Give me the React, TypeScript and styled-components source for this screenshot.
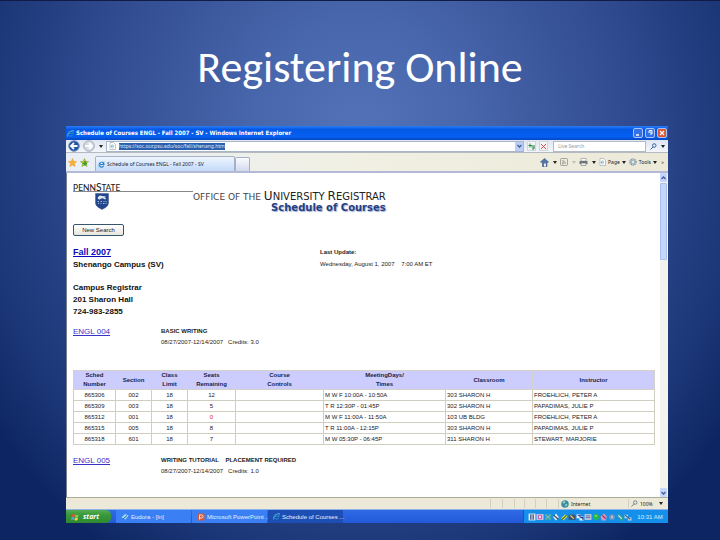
import React from "react";
import styled, { createGlobalStyle, css } from "styled-components";

const Global = createGlobalStyle`
  * { box-sizing: border-box; }
  body { margin: 0; background: #10265f; }
  button, input { font: inherit; margin: 0; padding: 0; border: 0; background: none; color: inherit; }
  svg { display: block; flex: none; }
`;

const Slide = styled.main`
  min-height: 100vh;
  padding: 0 52px 16px 66px;
  border-top: 1px solid #101c48;
  background: radial-gradient(ellipse 62% 92% at 50% 26%, #5573b8 0%, #4866ac 25%, #344f94 55%, #1c3777 85%, #0d2663 100%);
  font-family: "Liberation Sans", Arial, sans-serif;
  color: #222;
`;
const SlideTitle = styled.h1`
  margin: 0;
  height: 125px;
  padding: 41px 14px 0 0;
  text-align: center;
  color: #fff;
  font: 400 44px/50px Carlito, Lato, "Open Sans", sans-serif;
`;
const Window = styled.section`
  display: flex;
  flex-direction: column;
  background: #fff;
`;
const TitleBar = styled.header`
  display: flex;
  align-items: center;
  gap: 2px;
  height: 14px;
  padding: 0 1px;
  background: linear-gradient(#2a7cf5, #0458e6 25%, #0560f2 75%, #0347c4);
`;
const WindowName = styled.h2`
  flex: 1;
  margin: 0;
  color: #fff;
  white-space: nowrap;
  font: 700 6px/12px "DejaVu Sans Condensed", "DejaVu Sans", sans-serif;
`;
const Caption = styled.button<{ $close?: boolean }>`
  width: 10px;
  height: 10px;
  border: 1px solid #a9c3f5;
  border-radius: 2px;
  background: ${(p) => (p.$close ? "#dc5434" : "#3471e8")};
`;
const Row = styled.div<{ $h: number; $tabs?: boolean }>`
  display: flex;
  align-items: center;
  gap: 3px;
  height: ${(p) => p.$h}px;
  padding: 0 3px 0 2px;
  background: ${(p) => (p.$tabs ? "linear-gradient(90deg, #e9eff8, #f1f0e4 45%, #ece9d8)" : "linear-gradient(#dfe6f2, #f3f6fb)")};
  border-bottom: ${(p) => (p.$tabs ? "2px solid #b3b9d6" : "1px solid #b4bac2")};
`;
const Address = styled.label`
  flex: 1;
  display: flex;
  align-items: center;
  gap: 3px;
  height: 11px;
  padding-left: 2px;
  border: 1px solid #a9b6c8;
  background: #fff;
`;
const Url = styled.input`
  width: 106px;
  height: 7px;
  background: #2d5fae;
  color: #dfe8f6;
  font: 5px/7px "Noto Sans", sans-serif;
`;
const Spacer = styled.span`
  flex: 1;
`;
const Tool = styled.button<{ $boxed?: boolean; $blue?: boolean }>`
  display: flex;
  align-items: center;
  justify-content: center;
  gap: 2px;
  height: 10px;
  min-width: 5px;
  color: #222;
  font: 5px/8px "Noto Sans", sans-serif;
  ${(p) => p.$boxed && css`width: 9px; border: 1px solid #cfd6de; background: #f3f5f5;`}
  ${(p) => p.$blue && css`width: 8px; height: 9px; background: #bccdf6;`}
`;
const Search = styled.input`
  width: 93px;
  height: 11px;
  padding-left: 4px;
  margin: 0 1px 0 2px;
  border: 1px solid #b2bac2;
  background: #fff;
  font: 5px/9px "Noto Sans", sans-serif;
  &::placeholder { color: #999; opacity: 1; }
`;
const Tab = styled.button<{ $blank?: boolean }>`
  display: flex;
  align-items: center;
  gap: 2px;
  align-self: flex-end;
  width: ${(p) => (p.$blank ? 15 : 140)}px;
  height: ${(p) => (p.$blank ? 14 : 15)}px;
  margin-left: ${(p) => (p.$blank ? -3 : 3)}px;
  padding-left: 2px;
  border: 1px solid #a5b1c9;
  border-bottom: 0;
  border-radius: 2px 2px 0 0;
  background: ${(p) => (p.$blank ? "linear-gradient(#fafaff, #d3d9ec)" : "linear-gradient(#eef5fe, #c3daf8)")};
  white-space: nowrap;
  color: #223;
  font: 5px/8px "Noto Sans", sans-serif;
`;
const Viewport = styled.div`
  display: flex;
`;
const Page = styled.article`
  flex: 1;
  height: 324px;
  overflow: hidden;
  padding: 8px 5px 0 6px;
  border-left: 1px solid #777f8c;
`;
const ScrollTrack = styled.div`
  display: flex;
  flex-direction: column;
  justify-content: space-between;
  width: 8px;
  background: #f4f4ee;
`;
const ScrollTop = styled.div`
  display: grid;
  gap: 1px;
`;
const ScrollButton = styled.button`
  display: flex;
  align-items: center;
  justify-content: center;
  width: 7px;
  height: 9px;
  border-radius: 1px;
  background: #c5d5fb;
`;
const Thumb = styled.div`
  width: 7px;
  height: 77px;
  border: 1px solid #a9bdf0;
  border-radius: 1px;
  background: #c5d5fc;
`;
const Banner = styled.div`
  display: grid;
  grid-template-columns: 120px 1fr;
  height: 43px;
`;
const Offices = styled.div`
  padding-top: 9px;
  white-space: nowrap;
  color: #444;
  font: 9px/12px "DejaVu Sans", Verdana, sans-serif;
`;
const Caps = styled.span<{ $big?: boolean }>`
  font-size: ${(p) => (p.$big ? 12 : 10)}px;
  color: #222;
`;
const OfficeBlock = styled.div`
  width: max-content;
  text-align: right;
`;
const Schedule = styled.div`
  color: #263f7f;
  font: 700 10px/9px "DejaVu Sans", Verdana, sans-serif;
  text-shadow: 1px 1px 1px #9fb0d8;
`;
const NewSearch = styled.button`
  display: block;
  width: 51px;
  height: 12px;
  border: 1px solid #34566f;
  border-radius: 2px;
  background: linear-gradient(#fff, #e6e5dd);
  font-size: 6px;
  line-height: 10px;
`;
const Split = styled.div`
  display: grid;
  grid-template-columns: 247px 1fr;
  margin-top: 10px;
`;
const Block = styled.div<{ $bold?: boolean }>`
  font-size: ${(p) => (p.$bold ? 8 : 6)}px;
  line-height: 12px;
  font-weight: ${(p) => (p.$bold ? 700 : 400)};
  color: ${(p) => (p.$bold ? "#111" : "#222")};
  white-space: pre;
`;
const Contact = styled(Block)`
  margin-top: 11px;
`;
const Link = styled.a<{ $strong?: boolean }>`
  color: ${(p) => (p.$strong ? "#0a08b8" : "#3a32c8")};
  font-size: ${(p) => (p.$strong ? 9 : 8)}px;
`;
const Course = styled.div`
  display: grid;
  grid-template-columns: 88px 1fr;
  margin-top: 8px;
  color: #222;
  font-size: 6px;
  line-height: 11px;
  white-space: pre;
`;
const CourseName = styled.div`
  font-weight: 700;
`;
const Table = styled.table`
  width: 100%;
  margin: 22px 0 10px;
  table-layout: fixed;
  border-collapse: collapse;
  border: 1px solid #c2c0b2;
  font-size: 6px;
  line-height: 9px;
`;
const Th = styled.th`
  height: 19px;
  padding: 0;
  border: 1px solid #d3d1cb;
  background: #ccccfd;
  color: #1c1c48;
  white-space: pre-line;
`;
const Td = styled.td<{ $left?: boolean; $full?: boolean }>`
  height: 11px;
  padding: 0 1px;
  border: 1px solid #d0cebf;
  text-align: ${(p) => (p.$left ? "left" : "center")};
  color: ${(p) => (p.$full ? "#e02020" : "#20181e")};
  white-space: nowrap;
`;
const Status = styled.footer`
  display: flex;
  align-items: center;
  justify-content: flex-end;
  height: 12px;
  border-top: 1px solid #a9ad98;
  background: #ece9d8;
  font: 5px/8px "Noto Sans", sans-serif;
`;
const StatusCell = styled.span<{ $w: number }>`
  display: flex;
  align-items: center;
  gap: 2px;
  width: ${(p) => p.$w}px;
  height: 9px;
  border-left: 1px solid #d2cfbc;
  padding-left: 2px;
`;
const Taskbar = styled.nav`
  display: flex;
  align-items: stretch;
  height: 14px;
  border-top: 1px solid #8fb2ec;
  background: linear-gradient(#2f6be6, #2259d8);
`;
const Start = styled.button`
  display: flex;
  align-items: center;
  gap: 4px;
  width: 45px;
  margin-right: 4px;
  padding-left: 5px;
  border-radius: 0 5px 5px 0;
  background: linear-gradient(#55ad50, #37983a 40%, #2e8a30);
  color: #fff;
  font: italic 700 7px/12px "Open Sans", sans-serif;
`;
const Task = styled.button<{ $active?: boolean }>`
  display: flex;
  align-items: center;
  gap: 2px;
  width: 75px;
  margin-left: 1px;
  padding-left: 5px;
  border-radius: 1px;
  background: ${(p) => (p.$active ? "#1d4eb4" : "#3a80f4")};
  color: #e6effc;
  white-space: nowrap;
  font: 6px/12px "Liberation Sans", sans-serif;
`;
const Tray = styled.div`
  display: flex;
  align-items: center;
  width: 145px;
  margin-left: auto;
  padding-left: 4px;
  border-left: 1px solid #0b5cb5;
  background: #1590ea;
  color: #d9eefc;
  font: 6px/12px "Liberation Sans", sans-serif;
`;
const Clock = styled.time`
  flex: 1;
  text-align: center;
  white-space: nowrap;
`;

const IE = ({ size = 7 }: { size?: number }) => (
  <svg width={size} height={size} viewBox="0 0 14 14" fill="none">
    <path d="M11.5 9.5A4.8 4.8 0 1 1 12 7H4" stroke="#247cc4" strokeWidth="2.4" />
    <path d="M1 13C-1 9 8 0 13 1c1 .5.5 2 0 3" stroke="#8bd0ea" strokeWidth="1.2" />
  </svg>
);
const Caret = ({ faint }: { faint?: boolean }) => (
  <svg width="4" height="3" viewBox="0 0 4 3"><path d="M0 0h4L2 3z" fill={faint ? "#c4c1b4" : "#222"} /></svg>
);
const NavCircle = ({ back }: { back?: boolean }) => (
  <svg width="12" height="12" viewBox="0 0 12 12">
    <circle cx="6" cy="6" r="5.3" fill={back ? "#1f57a8" : "#d5dae2"} stroke={back ? "#8095b5" : "#a5adb8"} />
    <path d={back ? "M9.5 6H3m3-3L3 6l3 3" : "M2.5 6H9M6 3l3 3-3 3"} stroke="#fff" strokeWidth="1.8" fill="none" />
  </svg>
);
const Star = ({ add }: { add?: boolean }) => (
  <svg width="9" height="9" viewBox="0 0 18 18">
    <path d="m9 1 2.4 5.5 6 .6-4.5 4 1.3 5.9L9 14l-5.2 3 1.3-5.9-4.5-4 6-.6z" fill={add ? "#d9c43a" : "#f9b02c"} stroke={add ? "#6c9c38" : "#e09a3c"} />
    {add && <path d="M10 6v9M5 11h9" stroke="#2e9c2e" strokeWidth="3" />}
  </svg>
);
const PageIcon = () => (
  <svg width="7" height="8" viewBox="0 0 14 16">
    <path d="M2 1h7l4 4v10H2z" fill="#fff" stroke="#84909c" /><path d="M4 9h6M9 11a3 3 0 1 1 1-3" stroke="#4a8cae" fill="none" />
  </svg>
);
const Home = () => (
  <svg width="9" height="9" viewBox="0 0 18 18">
    <path d="M1 8 9 1l8 7-3 1v8H5V9z" fill="#5575a8" stroke="#26406e" /><path d="M8 11h4v6H8z" fill="#e8edf5" />
  </svg>
);
const Feed = () => (
  <svg width="8" height="8" viewBox="0 0 16 16" fill="none" stroke="#8c8c88" strokeWidth="1.5">
    <rect x="1" y="1" width="14" height="14" rx="2" /><path d="M4 5q7 0 7 7M4 8q4 0 4 4" /><circle cx="5" cy="11.5" r=".8" />
  </svg>
);
const Printer = () => (
  <svg width="9" height="8" viewBox="0 0 18 16">
    <path d="M4 1h10v5H4z" fill="#fff" stroke="#777" /><path d="M1 6h16v6H1z" fill="#70757c" /><path d="M4 10h10v5H4z" fill="#e9eaf0" stroke="#666" />
  </svg>
);
const Gear = () => (
  <svg width="8" height="8" viewBox="0 0 16 16" fill="none">
    <circle cx="8" cy="8" r="6" stroke="#7f9cb8" strokeWidth="3" strokeDasharray="2.6 1.2" /><circle cx="8" cy="8" r="4" stroke="#8da6bc" strokeWidth="2" />
  </svg>
);
const Lens = ({ color = "#3563a5" }: { color?: string }) => (
  <svg width="7" height="7" viewBox="0 0 14 14" fill="none" stroke={color} strokeWidth="2">
    <circle cx="8.5" cy="5" r="3.5" /><path d="m6 8-5 5" />
  </svg>
);
const Globe = () => (
  <svg width="8" height="8" viewBox="0 0 16 16">
    <circle cx="8" cy="8" r="7.5" fill="#3b8ba5" /><path d="M3 4q4-4 6 0-2 4-5 3zM8 9q5-2 5 1l-4 4z" fill="#8fd3b0" />
  </svg>
);
const Flag = () => (
  <svg width="8" height="8" viewBox="0 0 16 16">
    <path d="M2 3q3-2 6 0L7 8Q4 6 1 8z" fill="#e9512f" /><path d="M9 3q3 2 6 0l-1 5q-3 2-6 0z" fill="#8bd044" />
    <path d="M1 9q3-2 6 0l-1 5q-3-2-6 0z" fill="#5d9cf5" /><path d="M8 9q3 2 6 0l-1 5q-3 2-6 0z" fill="#fad03c" />
  </svg>
);
const Chevron = ({ down }: { down?: boolean }) => (
  <svg width="5" height="4" viewBox="0 0 10 8"><path d={down ? "m1 2 4 4 4-4" : "m1 6 4-4 4 4"} stroke="#405c92" strokeWidth="2.5" fill="none" /></svg>
);
const RuledName = styled.div`
  height: 11px;
  border-bottom: 1px solid #888;
  color: #222;
  font: 10px/12px Carlito, Lato, sans-serif;
`;
const BigS = styled.span`
  font-size: 12px;
`;
const Crest = styled.div`
  padding: 1px 0 0 22px;
`;
const PennState = () => (
  <div>
    <RuledName>PENN<BigS>S</BigS>TATE</RuledName>
    <Crest>
      <svg width="14" height="17" viewBox="0 0 28 34" role="img" aria-label="Shield">
        <path d="M1 1h26v19q0 7-13 13Q1 27 1 20z" fill="#23458b" stroke="#3c5c99" />
        <path d="M5 10q4-7 9-4l8 1-3 3h4l-3 3q-6-4-9-1t-6-2" fill="#dfe6f2" />
        <path d="M5 17h3m3 0h3m3 0h2m2 0h2M6 21h2m3 0h2m3 0h3m2 0h2" stroke="#a9bbdb" strokeWidth="2" />
      </svg>
    </Crest>
  </div>
);

const trayShapes = [
  ["#e6eaf0", "M1 1h12v12H1z", "#23406e", "M5 2v10M9 2v10"],
  ["#f0d5ea", "M1 2h12v10H1z", "#bd5da8", "M4 4h6v6H4z"],
  ["#62b78e", "M2 2h4v4H2zM8 2h4v4H8zM2 8h4v4H2zM8 8h4v4H8z", "#b6e0a8", "M5 7h4"],
  ["#eef3f4", "M7 1l5 7-5 5-5-6z", "#324a58", "M3 4l8 7"],
  ["#d8d850", "M2 9 9 2l4 4-7 7z", "#476d2e", "M3 12l8-8"],
  ["#40546c", "M1 3h12v9H1z", "#e8d56d", "M4 4l6 6"],
  ["#eef2fa", "M1 2h7v7H1zM6 6h7v7H6z", "#1e3490", "M3 4h4v4M8 8h4v4"],
  ["#c8ccdc", "M1 2h12v10H1z", "#7780a0", "M3 5h8M3 8h8"],
  ["#27b84a", "M7 1a6 6 0 0 1 5 8l-5 4-5-4a6 6 0 0 1 5-8", "#96ec9a", "M5 5h4"],
  ["#d993b5", "M7 1l5 5-2 7H3L1 6z", "#a13054", "M4 4l6 6"],
  ["#7794bc", "M7 2a5 5 0 1 1 0 10A5 5 0 0 1 7 2", "#dbe4f1", "M7 5v4"],
  ["#38a08b", "M2 2h6v5h4v6H6V8H2z", "#ccf0df", "M4 4l6 6"],
  ["#c7dae8", "M1 3h6v5h6v5H7V9H1z", "#3c5e86", "M2 4l9 7"],
];
const TrayIcon = ({ shape }: { shape: string[] }) => (
  <svg width="8" height="8" viewBox="0 0 14 14">
    <path d={shape[1]} fill={shape[0]} /><path d={shape[3]} stroke={shape[2]} strokeWidth="2" fill="none" />
  </svg>
);

const Col = styled.col<{ $w?: number }>`
  width: ${(p) => (p.$w ? `${p.$w}px` : "auto")};
`;
const colWidths = [42, 36, 36, 48, 88, 122, 87, 0];
const heads = ["Sched\nNumber", "Section", "Class\nLimit", "Seats\nRemaining", "Course\nControls", "MeetingDays/\nTimes", "Classroom", "Instructor"];
const sections = [
  ["865306", "002", "18", "12", "", "M W F 10:00A - 10:50A", "303 SHARON H", "FROEHLICH, PETER A"],
  ["865309", "003", "18", "5", "", "T R 12:30P - 01:45P", "302 SHARON H", "PAPADIMAS, JULIE P"],
  ["865312", "001", "18", "0", "", "M W F 11:00A - 11:50A", "103 UB BLDG", "FROEHLICH, PETER A"],
  ["865315", "005", "18", "8", "", "T R 11:00A - 12:15P", "303 SHARON H", "PAPADIMAS, JULIE P"],
  ["865318", "601", "18", "7", "", "M W 05:30P - 06:45P", "311 SHARON H", "STEWART, MARJORIE"],
];

export default function App() {
  return (
    <>
      <Global />
      <Slide>
        <SlideTitle>Registering Online</SlideTitle>
        <Window>
          <TitleBar>
            <IE />
            <WindowName>Schedule of Courses ENGL - Fall 2007 - SV - Windows Internet Explorer</WindowName>
            <Caption aria-label="Minimize">
              <svg width="8" height="8" viewBox="0 0 8 8"><path d="M2 6h3" stroke="#fff" strokeWidth="1.5" /></svg>
            </Caption>
            <Caption aria-label="Restore">
              <svg width="8" height="8" viewBox="0 0 8 8"><path d="M2 3h3v3M3 1.5h3V5" stroke="#fff" fill="none" /></svg>
            </Caption>
            <Caption $close aria-label="Close">
              <svg width="8" height="8" viewBox="0 0 8 8"><path d="m2 2 4 4m0-4L2 6" stroke="#fff" strokeWidth="1.3" /></svg>
            </Caption>
          </TitleBar>
          <Row $h={13}>
            <Tool aria-label="Back"><NavCircle back /></Tool>
            <Tool aria-label="Forward"><NavCircle /></Tool>
            <Tool aria-label="Recent pages"><Caret /></Tool>
            <Address>
              <PageIcon />
              <Url aria-label="Address" defaultValue="https://soc.our.psu.edu/soc/fall/shenang.html" />
              <Spacer />
              <Tool $blue aria-label="Show addresses"><Chevron down /></Tool>
            </Address>
            <Tool $boxed aria-label="Refresh">
              <svg width="7" height="7" viewBox="0 0 14 14" fill="none" stroke="#278b42" strokeWidth="2"><path d="M4 1v8M1 5h8M7 8h5V4M12 8v4H8" /></svg>
            </Tool>
            <Tool $boxed aria-label="Stop">
              <svg width="7" height="7" viewBox="0 0 14 14" stroke="#d04a4a" strokeWidth="2"><path d="m2 2 10 10m0-10L2 12" /></svg>
            </Tool>
            <Search aria-label="Live Search" placeholder="Live Search" />
            <Tool aria-label="Search"><Lens /></Tool>
            <Tool aria-label="Search options"><Caret /></Tool>
          </Row>
          <Row $h={20} $tabs>
            <Tool aria-label="Favorites"><Star /></Tool>
            <Tool aria-label="Add to favorites"><Star add /></Tool>
            <Tab><IE /> Schedule of Courses ENGL - Fall 2007 - SV</Tab>
            <Tab $blank aria-label="New tab" />
            <Spacer />
            <Tool aria-label="Home"><Home /></Tool>
            <Tool aria-label="Home options"><Caret /></Tool>
            <Tool aria-label="Feeds"><Feed /></Tool>
            <Tool aria-label="Feed options"><Caret faint /></Tool>
            <Tool aria-label="Print"><Printer /></Tool>
            <Tool aria-label="Print options"><Caret /></Tool>
            <Tool><PageIcon /> Page <Caret /></Tool>
            <Tool><Gear /> Tools <Caret /></Tool>
            <Tool aria-label="More">»</Tool>
          </Row>
          <Viewport>
            <Page>
              <Banner>
                <PennState />
                <Offices>
                  <OfficeBlock>
                    OFFICE OF THE <Caps $big>U</Caps><Caps>NIVERSITY</Caps> <Caps $big>R</Caps><Caps>EGISTRAR</Caps>
                    <Schedule>Schedule of Courses</Schedule>
                  </OfficeBlock>
                </Offices>
              </Banner>
              <NewSearch>New Search</NewSearch>
              <Split>
                <Block $bold><Link $strong href="#fall">Fall 2007</Link>{"\nShenango Campus (SV)"}</Block>
                <Block><b>Last Update:</b>{"\nWednesday, August 1, 2007    7:00 AM ET"}</Block>
              </Split>
              <Contact $bold>{"Campus Registrar\n201 Sharon Hall\n724-983-2855"}</Contact>
              <Course>
                <div><Link href="#engl004">ENGL 004</Link></div>
                <div><CourseName>BASIC WRITING</CourseName>{"08/27/2007-12/14/2007   Credits: 3.0"}</div>
              </Course>
              <Table>
                <colgroup>{colWidths.map((w, i) => <Col key={i} $w={w} />)}</colgroup>
                <thead><tr>{heads.map((h) => <Th key={h} scope="col">{h}</Th>)}</tr></thead>
                <tbody>
                  {sections.map((row) => (
                    <tr key={row[0]}>
                      {row.map((cell, i) => <Td key={i} $left={i > 4} $full={i === 3 && cell === "0"}>{cell}</Td>)}
                    </tr>
                  ))}
                </tbody>
              </Table>
              <Course>
                <div><Link href="#engl005">ENGL 005</Link></div>
                <div><CourseName>{"WRITING TUTORIAL    PLACEMENT REQUIRED"}</CourseName>{"08/27/2007-12/14/2007   Credits: 1.0"}</div>
              </Course>
            </Page>
            <ScrollTrack>
              <ScrollTop>
                <ScrollButton aria-label="Scroll up"><Chevron /></ScrollButton>
                <Thumb />
              </ScrollTop>
              <ScrollButton aria-label="Scroll down"><Chevron down /></ScrollButton>
            </ScrollTrack>
          </Viewport>
          <Status>
            <StatusCell $w={12} /><StatusCell $w={12} /><StatusCell $w={10} /><StatusCell $w={11} /><StatusCell $w={11} /><StatusCell $w={12} />
            <StatusCell $w={70}><Globe /> Internet</StatusCell>
            <StatusCell $w={40}><Lens color="#77859b" /> 100% <Spacer /><Caret /><Spacer /></StatusCell>
          </Status>
          <Taskbar>
            <Start><Flag />start</Start>
            <Task><svg width="8" height="8" viewBox="0 0 16 16"><path d="m1 9 7-7 7 3-6 8z" fill="#a5dcf5" /><path d="m4 12 8-7" stroke="#1763a8" strokeWidth="2" /></svg>Eudora - [In]</Task>
            <Task><svg width="8" height="8" viewBox="0 0 16 16"><path d="M1 1h14v14H1z" fill="#d6583c" /><path d="M5 13V4h4q3 0 3 3t-3 3H5" stroke="#fbe2d8" strokeWidth="2" fill="none" /></svg>Microsoft PowerPoint ...</Task>
            <Task $active><IE />Schedule of Courses ...</Task>
            <Tray>
              {trayShapes.map((s, i) => <TrayIcon key={i} shape={s} />)}
              <Clock>10:31 AM</Clock>
            </Tray>
          </Taskbar>
        </Window>
      </Slide>
    </>
  );
}
